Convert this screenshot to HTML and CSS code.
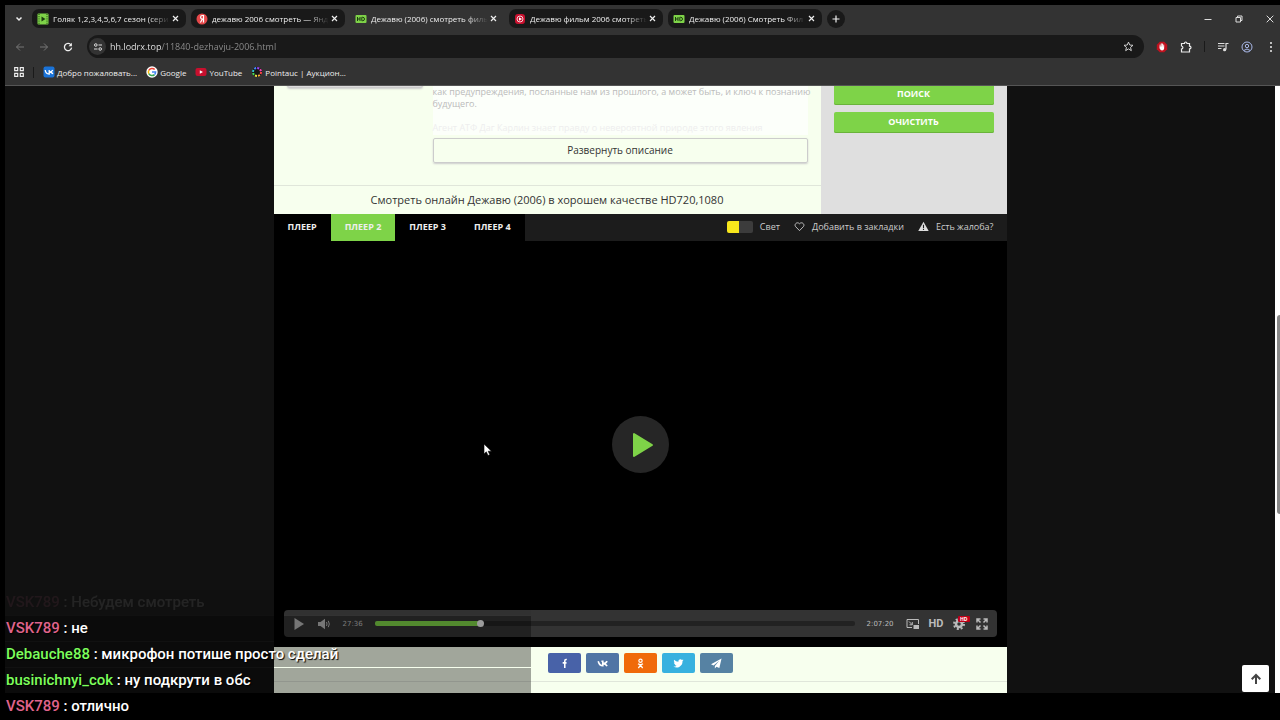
FILE: index.html
```html
<!DOCTYPE html>
<html lang="ru">
<head>
  <meta charset="UTF-8" />
  <title>Дежавю (2006) смотреть фильм онлайн</title>
  <link rel="stylesheet" href="styles.css">
</head>
<body>
  <div class="window">
    <header class="chrome">
      <div class="tabs">
        <button class="tabs-menu" aria-label="Поиск вкладок"><svg width="8" height="8" viewBox="0 0 8 8"><path d="M1.5 2.5 4 5l2.5-2.5" fill="none" stroke="#eee" stroke-width="1.5"/></svg></button>
        <div class="tab">
          <svg class="fav" viewBox="0 0 12 12"><rect x=".5" y=".5" width="11" height="11" rx="1" fill="#7ed348"/><path d="M2 1v10M10 1v10" stroke="#1d3d10" stroke-dasharray="1 1.2"/><path d="M4.5 3.5 8.500 6l-4 2.500z" fill="#1d3d10"/></svg>
          <span class="tab-name">Голяк 1,2,3,4,5,6,7 сезон (сери</span>
          <button class="close" aria-label="Закрыть"><svg width="7" height="7" viewBox="0 0 7 7"><path d="m1 1 5 5m0-5L1 6" stroke="#eee" stroke-width="1.200"/></svg></button>
        </div>
        <div class="tab">
          <svg class="fav" viewBox="0 0 12 12"><circle cx="6" cy="6" r="5.500" fill="#e5484a"/><path d="M7.500 9.500v-7H6.300c-2.300 0-2.300 3.600 0 3.600h1.200M6.300 6.200 4.400 9.500" fill="none" stroke="#fff" stroke-width="1.200"/></svg>
          <span class="tab-name">дежавю 2006 смотреть — Янд</span>
          <button class="close" aria-label="Закрыть"><svg width="7" height="7" viewBox="0 0 7 7"><path d="m1 1 5 5m0-5L1 6" stroke="#eee" stroke-width="1.200"/></svg></button>
        </div>
        <div class="tab active">
          <svg class="fav" viewBox="0 0 12 12"><rect x=".5" y="2" width="11" height="8" rx="1" fill="#7ed348"/><path d="M2.500 4v4M5 4v4M2.500 6H5M6.800 4.300h.9q1.800 0 1.800 1.700T7.700 7.700h-.9z" fill="none" stroke="#1d3d10"/></svg>
          <span class="tab-name">Дежавю (2006) смотреть филь</span>
          <button class="close" aria-label="Закрыть"><svg width="7" height="7" viewBox="0 0 7 7"><path d="m1 1 5 5m0-5L1 6" stroke="#eee" stroke-width="1.200"/></svg></button>
        </div>
        <div class="tab">
          <svg class="fav" viewBox="0 0 12 12"><rect x="1" y="1" width="10" height="10" rx="3" fill="#c8102e"/><circle cx="6" cy="6" r="3" fill="none" stroke="#fff" stroke-width=".8"/><path d="M5 4.300 8 6 5 7.700z" fill="#fff"/></svg>
          <span class="tab-name">Дежавю фильм 2006 смотреть</span>
          <button class="close" aria-label="Закрыть"><svg width="7" height="7" viewBox="0 0 7 7"><path d="m1 1 5 5m0-5L1 6" stroke="#eee" stroke-width="1.200"/></svg></button>
        </div>
        <div class="tab">
          <svg class="fav" viewBox="0 0 12 12"><rect x=".5" y="2" width="11" height="8" rx="1" fill="#7ed348"/><path d="M2.500 4v4M5 4v4M2.500 6H5M6.800 4.300h.9q1.800 0 1.800 1.700T7.700 7.700h-.9z" fill="none" stroke="#1d3d10"/></svg>
          <span class="tab-name">Дежавю (2006) Смотреть Фил</span>
          <button class="close" aria-label="Закрыть"><svg width="7" height="7" viewBox="0 0 7 7"><path d="m1 1 5 5m0-5L1 6" stroke="#eee" stroke-width="1.200"/></svg></button>
        </div>
        <button class="new-tab" aria-label="Новая вкладка"><svg width="8" height="8" viewBox="0 0 8 8"><path d="M4 .5v7M.5 4h7" stroke="#eee" stroke-width="1.200"/></svg></button>
        <div class="win-btns">
          <button aria-label="Свернуть"><svg width="8" height="8" viewBox="0 0 8 8"><path d="M.5 4.500h7" stroke="#ddd"/></svg></button>
          <button aria-label="Развернуть"><svg width="8" height="8" viewBox="0 0 8 8"><path d="M1 2.500h4.500V7H1zM2.500 2.500V1H7v4.500H5.500" fill="none" stroke="#ddd"/></svg></button>
          <button aria-label="Закрыть окно"><svg width="8" height="8" viewBox="0 0 8 8"><path d="m.7.7 6.600 6.600m0-6.600L.7 7.300" stroke="#ddd"/></svg></button>
        </div>
      </div>

      <div class="toolbar">
        <div class="nav">
          <button aria-label="Назад"><svg width="10" height="10" viewBox="0 0 10 10"><path d="M9 5H1.500M5 1.500 1.500 5 5 8.500" fill="none" stroke="#777"/></svg></button>
          <button aria-label="Вперёд"><svg width="10" height="10" viewBox="0 0 10 10"><path d="M1 5h7.500M5 1.500 8.500 5 5 8.500" fill="none" stroke="#777"/></svg></button>
          <button aria-label="Обновить"><svg width="10" height="10" viewBox="0 0 10 10"><path d="M8 3A3.600 3.600 0 1 0 8.600 5.600" fill="none" stroke="#eee" stroke-width="1.300"/><path d="M8.900.8v3.400H5.500z" fill="#eee"/></svg></button>
        </div>
        <div class="address">
          <span class="site-info"><svg width="10" height="10" viewBox="0 0 10 10"><path d="M5.500 3H9M1 7h3.500" stroke="#ddd" stroke-width="1.200"/><circle cx="2.800" cy="3" r="1.300" fill="none" stroke="#ddd"/><circle cx="7.200" cy="7" r="1.300" fill="none" stroke="#ddd"/></svg></span>
          <input class="url" type="text" aria-label="Адрес" value="hh.lodrx.top/11840-dezhavju-2006.html">
          <button aria-label="В закладки"><svg width="11" height="11" viewBox="0 0 12 12"><path d="m6 1.200 1.400 3.200 3.500.3-2.700 2.300.9 3.500L6 8.600l-3.100 1.900.9-3.500L1.100 4.700l3.500-.3z" fill="none" stroke="#ddd"/></svg></button>
        </div>
        <div class="tools">
          <button aria-label="AdBlock"><svg width="12" height="12" viewBox="0 0 12 12"><path d="M3.800.8h4.400l3 3v4.400l-3 3H3.800l-3-3V3.800z" fill="#c1121f"/><path d="M4.100 6.400V4M5.300 6V2.800M6.500 6V3M7.700 6V4" stroke="#fff" stroke-width=".9" stroke-linecap="round"/><path d="M3.700 5.500h4.400v2.300Q7.800 9.500 6 9.500 4.500 9.500 3.700 7.500z" fill="#fff"/></svg></button>
          <button aria-label="Расширения"><svg width="12" height="12" viewBox="0 0 12 12"><path d="M1.500 2.500h3q0-1.500 1.200-1.500T7 2.500h2.500v2.700q1.500 0 1.500 1.300T9.500 7.800V11h-8V8q1.400-.2 1.400-1.500T1.500 5z" fill="none" stroke="#eee" stroke-width="1.200"/></svg></button>
          <i class="divider"></i>
          <button aria-label="Медиа"><svg width="12" height="12" viewBox="0 0 12 12"><path d="M1 2.500h6.500M1 5h6.500M1 7.500h3.500M9 2.500h2.500M9 2v6.500" stroke="#ddd" stroke-width="1.200"/><circle cx="7.600" cy="8.700" r="1.600" fill="#ddd"/></svg></button>
          <button aria-label="Профиль"><svg width="12" height="12" viewBox="0 0 12 12"><g fill="none" stroke="#a9b8e8"><circle cx="6" cy="6" r="5"/><circle cx="6" cy="5" r="1.700"/><path d="M2.800 9.500Q6 6.500 9.200 9.500"/></g></svg></button>
          <button aria-label="Меню"><svg width="12" height="12" viewBox="0 0 12 12"><g fill="#eee"><circle cx="6" cy="2" r="1"/><circle cx="6" cy="6" r="1"/><circle cx="6" cy="10" r="1"/></g></svg></button>
        </div>
      </div>

      <nav class="bookmarks">
        <button aria-label="Приложения"><svg width="10" height="10" viewBox="0 0 10 10"><path d="M.7.7h3v3h-3zM6.300.7h3v3h-3zM.7 6.300h3v3h-3zM6.300 6.300h3v3h-3z" fill="none" stroke="#eee" stroke-width="1.200"/></svg></button>
        <i class="divider"></i>
        <a href="#"><svg class="fav" viewBox="0 0 12 12"><rect x=".5" y=".5" width="11" height="11" rx="2" fill="#1a73d8"/><path d="M2.200 4q.5 4 4 4V4M9.700 4Q9 6 6.500 6 9 6 9.800 8" fill="none" stroke="#fff" stroke-width="1.300"/></svg>Добро пожаловать...</a>
        <a href="#"><svg class="fav" viewBox="0 0 12 12"><circle cx="6" cy="6" r="5.700" fill="#fff"/><g fill="none" stroke-width="1.500"><path d="M8.700 3.600A3.600 3.600 0 0 0 2.800 4.400" stroke="#ea4335"/><path d="M2.800 4.400a3.600 3.600 0 0 0 0 3.200" stroke="#fbbc05"/><path d="M2.800 7.600a3.600 3.600 0 0 0 5.700 1" stroke="#34a853"/><path d="M8.500 8.600Q9.600 7.600 9.600 6H6" stroke="#4285f4"/></g></svg>Google</a>
        <a href="#"><svg class="fav" viewBox="0 0 12 12"><rect x=".5" y="2" width="11" height="8" rx="2" fill="#c8102e"/><path d="M4.800 4.200 8 6 4.800 7.800z" fill="#fff"/></svg>YouTube</a>
        <a href="#"><svg class="fav" viewBox="0 0 12 12"><circle cx="6" cy="6" r="5" fill="#161616"/><g fill="none" stroke-width="2" stroke-dasharray="2 23.130"><circle cx="6" cy="6" r="4" stroke="#f44"/><circle cx="6" cy="6" r="4" stroke="#fa3" stroke-dashoffset="-3.100"/><circle cx="6" cy="6" r="4" stroke="#ee4" stroke-dashoffset="-6.200"/><circle cx="6" cy="6" r="4" stroke="#4d5" stroke-dashoffset="-9.300"/><circle cx="6" cy="6" r="4" stroke="#3cd" stroke-dashoffset="-12.400"/><circle cx="6" cy="6" r="4" stroke="#48f" stroke-dashoffset="-15.500"/><circle cx="6" cy="6" r="4" stroke="#a4f" stroke-dashoffset="-18.600"/><circle cx="6" cy="6" r="4" stroke="#f4b" stroke-dashoffset="-21.700"/></g></svg>Pointauc | Аукцион...</a>
      </nav>
    </header>

    <div class="viewport">
      <div class="page">
        <div class="content">
          <div class="cols">
            <main class="film">
              <div class="film-info">
                <div class="poster"></div>
                <div class="about">
                  <div class="desc">
                    <p>как предупреждения, посланные нам из прошлого, а может быть, и ключ к познанию будущего.</p>
                    <p class="faded">Агент АТФ Даг Карлин знает правду о невероятной природе этого явления</p>
                  </div>
                  <button class="expand">Развернуть описание</button>
                </div>
              </div>
              <h2>Смотреть онлайн Дежавю (2006) в хорошем качестве HD720,1080</h2>
            </main>
            <aside class="filter">
              <button>Поиск</button>
              <button>Очистить</button>
            </aside>
          </div>

          <div class="player-head">
            <div class="player-tabs">
              <button>ПЛЕЕР</button>
              <button class="current">ПЛЕЕР 2</button>
              <button>ПЛЕЕР 3</button>
              <button>ПЛЕЕР 4</button>
            </div>
            <div class="player-links">
              <label><input type="checkbox" class="light">Свет</label>
              <a href="#"><svg width="11" height="11" viewBox="0 0 12 12"><path d="M6 10.500 1.800 6.200C-.3 3.800 3.300.2 6 3c2.700-2.800 6.300.8 4.200 3.200z" fill="none" stroke="#ccc"/></svg>Добавить в закладки</a>
              <a href="#"><svg width="11" height="11" viewBox="0 0 12 12"><path d="M6 .8 11.700 11H.3z" fill="#ddd"/><path d="M6 4v3.500M6 8.500v1.300" stroke="#1c1c1c" stroke-width="1.200"/></svg>Есть жалоба?</a>
            </div>
          </div>

          <div class="player">
            <button class="big-play" aria-label="Смотреть"><svg width="22" height="26" viewBox="0 0 22 26"><path d="M2 2v22l18-11z" fill="#7ed348" stroke="#7ed348" stroke-width="2" stroke-linejoin="round"/></svg></button>
            <div class="controls">
              <button aria-label="Пуск"><svg width="12" height="12" viewBox="0 0 12 12"><path d="M1.500 0v12L11 6z" fill="#b5b5b5"/></svg></button>
              <button aria-label="Звук"><svg width="14" height="12" viewBox="0 0 14 12"><path d="M1 4h2.500L8 .8v10.400L3.500 8H1z" fill="#b5b5b5"/><path d="M9.500 4q1 2 0 4M11.300 2.800q2 3.200 0 6.400" fill="none" stroke="#b5b5b5"/></svg></button>
              <span class="time">27:36</span>
              <input class="seek" type="range" min="0" max="7640" value="1656" aria-label="Перемотка">
              <span class="time">2:07:20</span>
              <div class="extra">
                <button aria-label="Картинка в картинке"><svg width="14" height="12" viewBox="0 0 14 12"><path d="M6 9.500H1V1.500h11.500V6" fill="none" stroke="#bbb"/><path d="m3 3.500 3 3M6.300 4v2.800H3.500" fill="none" stroke="#bbb"/><path d="M7.500 7H13v4H7.500z" fill="#bbb"/></svg></button>
                <button class="quality">HD</button>
                <button class="gear" aria-label="Настройки"><svg width="14" height="12" viewBox="0 0 14 12"><circle cx="6" cy="6" r="3" fill="none" stroke="#bbb" stroke-width="2.500"/><circle cx="6" cy="6" r="5" fill="none" stroke="#bbb" stroke-width="2" stroke-dasharray="2 1.927"/></svg><b>HD</b></button>
                <button aria-label="На весь экран"><svg width="12" height="12" viewBox="0 0 12 12"><path d="M1 4.500V1h3.500M1 1l3.500 3.500M7.500 1H11v3.500M11 1 7.500 4.500M1 7.500V11h3.500M1 11l3.500-3.500M11 7.500V11H7.500M11 11 7.500 7.500" fill="none" stroke="#bbb" stroke-width="1.500"/></svg></button>
              </div>
            </div>
          </div>

          <div class="share-box">
            <div class="share">
              <a class="fb" href="#" aria-label="Facebook"><svg viewBox="0 0 12 12"><path d="M8.500 1.700H7.700Q6.300 1.700 6.300 3.200V11M4 5.300h4.200" fill="none" stroke="#fff" stroke-width="1.700"/></svg></a>
              <a class="vk" href="#" aria-label="ВКонтакте"><svg viewBox="0 0 12 12"><path d="M1.300 3.500q1.500 5 5 5V3.500H4.800M11 3.500Q9.800 6.200 6.500 6.200 9.500 6.200 11 8.800" fill="none" stroke="#fff" stroke-width="1.800"/></svg></a>
              <a class="ok" href="#" aria-label="Одноклассники"><svg viewBox="0 0 12 12"><circle cx="6" cy="3" r="1.800" fill="none" stroke="#fff" stroke-width="1.300"/><path d="M3.300 6.300Q6 8.300 8.700 6.300M6 7.500 3.700 11M6 7.500 8.300 11" fill="none" stroke="#fff" stroke-width="1.400"/></svg></a>
              <a class="tw" href="#" aria-label="Twitter"><svg viewBox="0 0 24 24"><path d="M23 5a9 9 0 0 1-2.600.7 4.500 4.500 0 0 0 2-2.500 9 9 0 0 1-2.900 1.100 4.500 4.500 0 0 0-7.700 4.100A12.800 12.800 0 0 1 2.500 3.700a4.500 4.500 0 0 0 1.400 6 4.500 4.500 0 0 1-2-.6 4.500 4.500 0 0 0 3.600 4.500 4.500 4.500 0 0 1-2 .1 4.500 4.500 0 0 0 4.200 3.100A9 9 0 0 1 1 18.700 12.800 12.800 0 0 0 20.700 7.300 9 9 0 0 0 23 5z" fill="#fff"/></svg></a>
              <a class="tg" href="#" aria-label="Telegram"><svg viewBox="0 0 12 12"><path d="M11.500.5 0 6.800l2.800 1.300L9 3 4.200 8.700V11.500l1.700-2 3.200 1.500z" fill="#fff"/></svg></a>
            </div>
          </div>
        </div>
        <a class="to-top" href="#" aria-label="Наверх"><svg width="12" height="12" viewBox="0 0 12 12"><path d="M6 11V2M1.700 6.200 6 2l4.300 4.200" fill="none" stroke="#444" stroke-width="2"/></svg></a>
      </div>
      <div class="scroll"><i></i></div>
    </div>
  </div>

  <div class="chat">
    <p class="old"><b class="pink">VSK789</b> : Небудем смотреть</p>
    <p><b class="pink">VSK789</b> : не</p>
    <p><b class="green">Debauche88</b> : микрофон потише просто сделай</p>
    <p><b class="green">businichnyi_cok</b> : ну подкрути в обс</p>
    <p><b class="pink">VSK789</b> : отлично</p>
  </div>

  <svg class="cursor" width="10" height="14" viewBox="0 0 10 14"><path d="M1 1v10l2.300-2.200L5 12.500l1.800-.8L5.200 8.200h3.300z" fill="#fff" stroke="#000" stroke-width=".6"/></svg>
</body>
</html>
```

FILE: styles.css
```css
* { box-sizing: border-box; }
body {
  margin: 0;
  background: #000;
  font-family: "Open Sans", "Noto Sans", sans-serif;
  font-size: 10px;
  color: #eee;
}
button, input {
  margin: 0;
  padding: 0;
  border: 0;
  background: none;
  color: inherit;
  font: inherit;
}
button { cursor: pointer; }
a { color: inherit; text-decoration: none; }
p, h2 { margin: 0; }
svg { display: block; flex: none; }

.window {
  display: flex;
  flex-direction: column;
  height: 100vh;
  padding: 5px 0 27px 5px;
  overflow: hidden;
}

/* browser chrome */
.chrome {
  padding-bottom: 2px;
  background: #333;
  border-bottom: 1px solid #555;
  font-size: 8px;
}
.fav { width: 12px; height: 12px; }
.tabs { display: flex; align-items: center; gap: 5px; height: 27px; }
.tabs-menu { width: 22px; display: flex; justify-content: center; margin-left: 3px; margin-right: -3px; }
.tab {
  display: flex;
  align-items: center;
  width: 154px;
  height: 19px;
  padding: 0 7px 0 5px;
  border-radius: 7px;
  background: #191919;
}
.tab.active { background: none; }
.tab-name {
  flex: 1;
  margin: 0 2px 0 4px;
  overflow: hidden;
  white-space: nowrap;
  -webkit-mask-image: linear-gradient(90deg, #000 82%, transparent);
}
.new-tab {
  display: flex;
  align-items: center;
  justify-content: center;
  width: 18px;
  height: 18px;
  border-radius: 50%;
  background: #191919;
}
.win-btns { display: flex; gap: 23px; margin-left: auto; padding-right: 6px; }
.toolbar { display: flex; align-items: center; height: 29px; }
.nav { display: flex; gap: 14px; padding: 0 14px 0 10px; }
.address {
  flex: 1;
  display: flex;
  align-items: center;
  height: 23px;
  padding: 0 10px 0 2px;
  border-radius: 12px;
  background: #191919;
}
.site-info {
  display: flex;
  align-items: center;
  justify-content: center;
  width: 17px;
  height: 17px;
  border-radius: 50%;
  background: #333;
}
.url {
  flex: 1;
  margin-left: 4px;
  font-size: 9px;
  background: linear-gradient(90deg, #eee 52px, #8f8f8f 52px);
  -webkit-background-clip: text;
  -webkit-text-fill-color: transparent;
}
.tools { display: flex; align-items: center; gap: 12px; padding: 0 3px 0 12px; }
.divider { width: 1px; height: 11px; background: #1a1a1a; }
.bookmarks { display: flex; align-items: center; gap: 9px; height: 22px; padding-left: 9px; }
.bookmarks a { display: flex; align-items: center; gap: 2px; }

/* site */
.viewport { flex: 1; display: flex; min-height: 0; }
.page { position: relative; flex: 1; overflow: hidden; background: #111; }
.content { max-width: 733px; margin: -15px auto 0; }
.cols { display: flex; background: #f7ffee; }
.film { flex: 1; color: #333; }
.film-info { display: flex; gap: 10px; padding: 0 13px; height: 114px; }
.poster { width: 136px; height: 17px; border: 1px solid #ccc; border-radius: 3px; background: #ddd; box-shadow: 0 1px 2px #ccc; }
.about { flex: 1; }
.desc {
  height: 64px;
  margin-bottom: 3px;
  padding-top: 15px;
  background: #fcfffa;
  color: #bbb;
  font-size: 9px;
  line-height: 12px;
}
.desc p { margin-right: -10px; }
.desc .faded { margin-top: 12px; color: #eee; }
.expand {
  width: 100%;
  height: 25px;
  padding-bottom: 2px;
  border: 1px solid #ccc;
  border-radius: 2px;
  box-shadow: 0 1px 2px #ccc;
  font-weight: 500;
}
.film h2 {
  border-top: 1px solid #e0e6da;
  font-size: 11px;
  font-weight: 500;
  line-height: 28px;
  text-align: center;
}
.filter {
  display: flex;
  flex-direction: column;
  gap: 7px;
  width: 186px;
  padding: 13px;
  background: #dfdfdf;
}
.filter button {
  height: 21px;
  padding-bottom: 2px;
  border-radius: 2px;
  background: #7ed348;
  box-shadow: inset 0 -1px #69b33a;
  color: #fff;
  font-size: 9px;
  font-weight: 700;
  text-transform: uppercase;
}
.player-head { display: flex; justify-content: space-between; height: 27px; background: #1c1c1c; font-size: 9px; }
.player-tabs { display: flex; background: #000; }
.player-tabs button { padding: 0 14px 2px; font-weight: 700; }
.player-tabs .current { background: #7ed348; }
.player-links { display: flex; align-items: center; gap: 14px; padding: 0 13px 2px 0; color: #ccc; }
.player-links > * { display: flex; align-items: center; gap: 7px; }
.light {
  appearance: none;
  width: 26px;
  height: 12px;
  border-radius: 2px;
  background: linear-gradient(90deg, #f8e71c 12px, #3c3c3c 12px);
}
.player {
  display: flex;
  flex-direction: column;
  justify-content: space-between;
  align-items: center;
  height: 406px;
  padding: 175px 10px 10px;
  background: #000;
}
.big-play {
  display: flex;
  align-items: center;
  justify-content: center;
  width: 57px;
  height: 57px;
  padding-left: 5px;
  border-radius: 50%;
  background: #262626;
}
.controls {
  display: flex;
  align-items: center;
  gap: 12px;
  width: 100%;
  height: 27px;
  padding: 0 9px;
  border-radius: 4px;
  background: #333;
  color: #bbb;
}
.time { font: 7px "DejaVu Sans", sans-serif; }
.seek {
  flex: 1;
  appearance: none;
  height: 5px;
  border-radius: 2px;
  background: linear-gradient(90deg, #7ed348 22%, #222 22%);
}
.seek::-webkit-slider-thumb {
  appearance: none;
  width: 7px;
  height: 7px;
  border-radius: 50%;
  background: #eee;
}
.extra { display: flex; align-items: center; gap: 9px; }
.quality { font-family: Roboto, sans-serif; font-size: 11px; font-weight: 700; }
.gear { position: relative; }
.gear b {
  position: absolute;
  top: -2px;
  right: -3px;
  padding: 0 2px;
  border-radius: 1px;
  background: #c00018;
  color: #fff;
  font-size: 5px;
  line-height: 6px;
}
.share-box { height: 80px; padding-top: 6px; background: #f7ffee; }
.share {
  display: flex;
  justify-content: center;
  gap: 5px;
  height: 29px;
  border-bottom: 1px solid #e0e6da;
}
.share a {
  display: flex;
  align-items: center;
  justify-content: center;
  width: 33px;
  height: 20px;
  border-radius: 2px;
}
.share svg { width: 11px; height: 11px; }
.fb { background: #4862a8; }
.vk { background: #5075a5; }
.ok { background: #f06a0a; }
.tw { background: #37b1df; }
.tg { background: #5682a3; }
.to-top {
  position: absolute;
  right: 6px;
  bottom: 1px;
  display: flex;
  align-items: center;
  justify-content: center;
  width: 27px;
  height: 27px;
  border-radius: 2px;
  background: #fff;
}
.scroll { width: 5px; padding: 229px 0 0 2px; background: #fff; }
.scroll i { display: block; height: 199px; border-radius: 3px 0 0 3px; background: #888; }

/* stream chat over the window */
.chat {
  position: absolute;
  left: 0;
  bottom: 1px;
  width: 531px;
  display: flex;
  flex-direction: column;
  gap: 1px;
  font: 500 15px/25px Roboto, sans-serif;
  color: #fff;
  text-shadow: 1px 1px 1px #000;
}
.chat p { padding-left: 6px; background: rgba(0, 0, 0, 0.35); }
.chat b { font-weight: 500; }
.chat .old { opacity: 0.08; }
.pink { color: #e0648c; }
.green { color: #7dff5c; }
.cursor { position: absolute; left: 483px; top: 443px; }
```
